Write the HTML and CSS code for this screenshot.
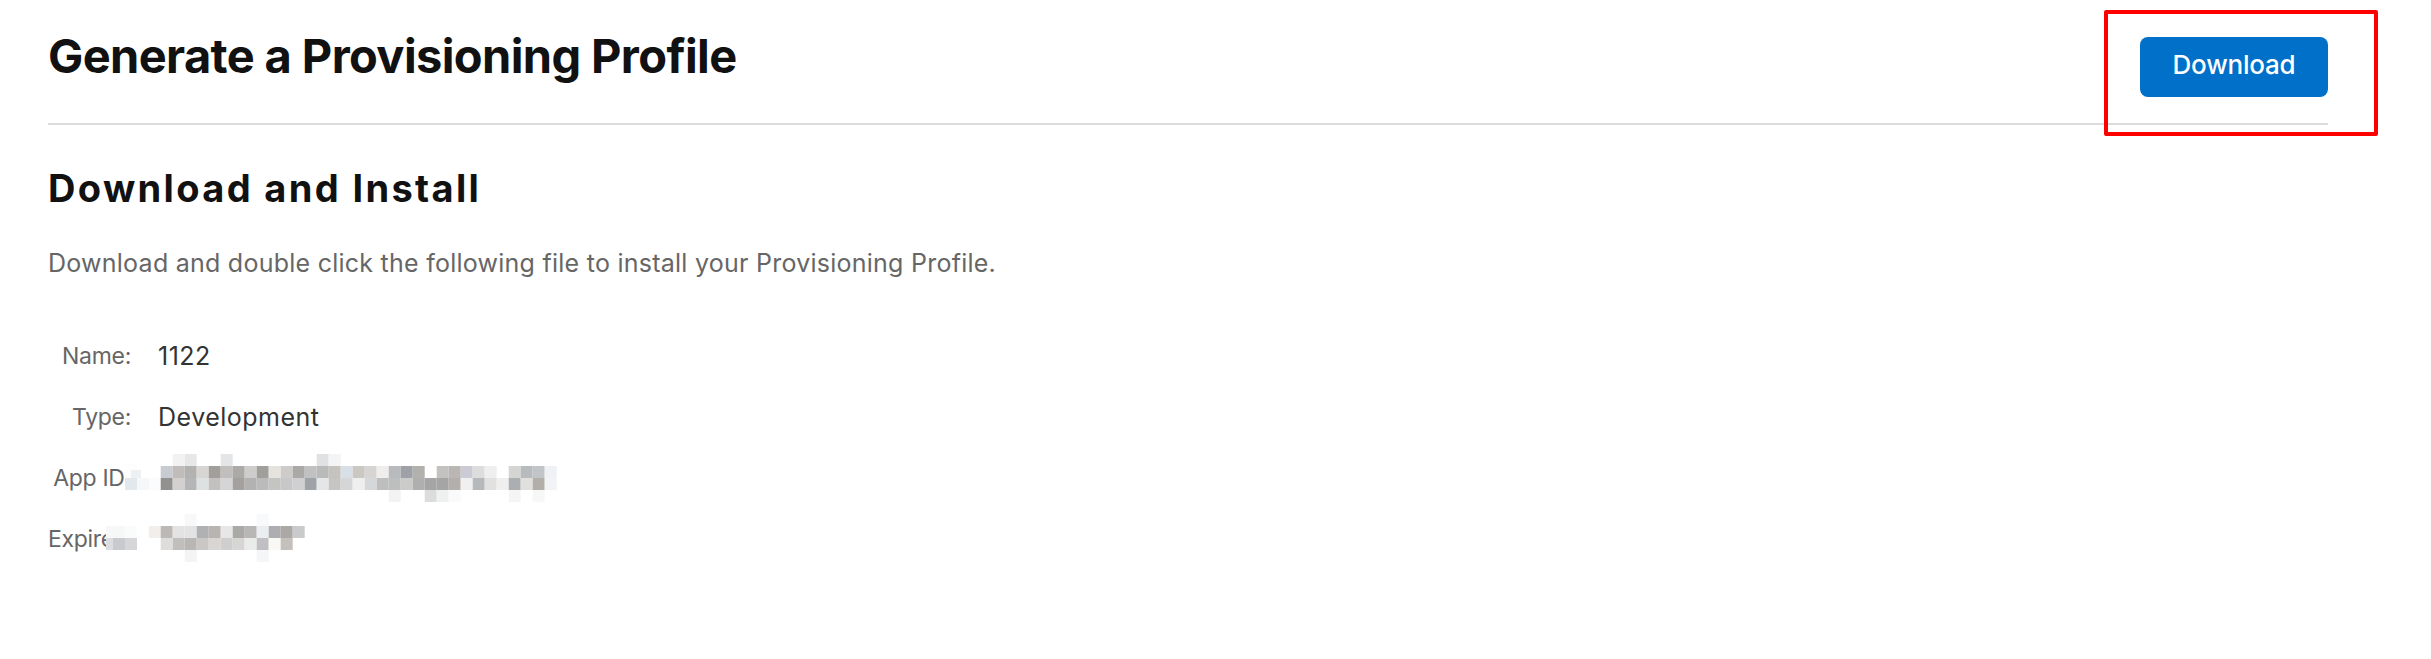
FILE: index.html
```html
<!DOCTYPE html>
<html lang="en">
<head>
<meta charset="utf-8">
<title>Generate a Provisioning Profile</title>
<link rel="stylesheet" href="styles.css">
</head>
<body>
<div class="page">
  <header class="page-header">
    <h1 class="title">Generate a Provisioning Profile</h1>
    <button class="btn-primary" type="button">Download</button>
  </header>
  <section class="section">
    <h2 class="section-title">Download and Install</h2>
    <p class="section-desc">Download and double click the following file to install your Provisioning Profile.</p>
    <div class="details">
      <div class="row">
        <span class="label">Name:</span>
        <span class="value">1122</span>
      </div>
      <div class="row">
        <span class="label">Type:</span>
        <span class="value">Development</span>
      </div>
      <div class="row">
        <span class="label">App ID:</span>
        <span class="value">&nbsp;</span>
        <svg class="mosaic mosaic-appid" width="470" height="60" viewBox="100 450 470 60" aria-hidden="true">
          <g>
            <rect x="125" y="464" width="12" height="14" fill="#fdfdfe"/>
            <rect x="125" y="478" width="12" height="12" fill="#e3e8ec"/>
            <rect x="137" y="478" width="12" height="12" fill="#f5f7f9"/>
            <rect x="149" y="478" width="12" height="12" fill="#fbfcfd"/>
            <rect x="131" y="470" width="10" height="8" fill="#eef1f4"/>
          </g>
          <g>
            <rect x="172.7" y="454" width="12" height="12" fill="#f2f2f2"/>
            <rect x="184.7" y="454" width="12" height="12" fill="#e6e7e9"/>
            <rect x="220.7" y="454" width="12" height="12" fill="#e4e5e7"/>
            <rect x="316.7" y="454" width="12" height="12" fill="#e0e1e3"/>
            <rect x="328.7" y="454" width="12" height="12" fill="#f4f4f4"/>
          </g>
          <g>
            <rect x="160.7" y="466" width="12" height="12" fill="#c8ccd2"/>
            <rect x="172.7" y="466" width="12" height="12" fill="#bfbcb9"/>
            <rect x="184.7" y="466" width="12" height="12" fill="#b4b2b0"/>
            <rect x="196.7" y="466" width="12" height="12" fill="#d7d6d3"/>
            <rect x="208.7" y="466" width="12" height="12" fill="#a29f9b"/>
            <rect x="220.7" y="466" width="12" height="12" fill="#c0bfbe"/>
            <rect x="232.7" y="466" width="12" height="12" fill="#acaaa7"/>
            <rect x="244.7" y="466" width="12" height="12" fill="#cfcdcb"/>
            <rect x="256.7" y="466" width="12" height="12" fill="#a19f9b"/>
            <rect x="268.7" y="466" width="12" height="12" fill="#e6e3de"/>
            <rect x="280.7" y="466" width="12" height="12" fill="#cdcccb"/>
            <rect x="292.7" y="466" width="12" height="12" fill="#aba9a5"/>
            <rect x="304.7" y="466" width="12" height="12" fill="#c1c1c1"/>
            <rect x="316.7" y="466" width="12" height="12" fill="#b9bbba"/>
            <rect x="328.7" y="466" width="12" height="12" fill="#c6c3bf"/>
            <rect x="340.7" y="466" width="12" height="12" fill="#d9dfe7"/>
            <rect x="352.7" y="466" width="12" height="12" fill="#cbc7c3"/>
            <rect x="364.7" y="466" width="12" height="12" fill="#d6d5d3"/>
            <rect x="376.7" y="466" width="12" height="12" fill="#efeeec"/>
            <rect x="388.7" y="466" width="12" height="12" fill="#b8babd"/>
            <rect x="400.7" y="466" width="12" height="12" fill="#9ea2a8"/>
            <rect x="412.7" y="466" width="12" height="12" fill="#b2b1ad"/>
            <rect x="436.7" y="466" width="12" height="12" fill="#c3c2c0"/>
            <rect x="448.7" y="466" width="12" height="12" fill="#b9b6b3"/>
            <rect x="460.7" y="466" width="12" height="12" fill="#cacbd5"/>
            <rect x="472.7" y="466" width="12" height="12" fill="#dddddd"/>
            <rect x="484.7" y="466" width="12" height="12" fill="#efefef"/>
            <rect x="508.7" y="466" width="12" height="12" fill="#d5d5d3"/>
            <rect x="520.7" y="466" width="12" height="12" fill="#b8bbbd"/>
            <rect x="532.7" y="466" width="12" height="12" fill="#c2c5c8"/>
            <rect x="544.7" y="466" width="12" height="12" fill="#eef1f5"/>
          </g>
          <g>
            <rect x="160.7" y="478" width="12" height="12" fill="#93918f"/>
            <rect x="172.7" y="478" width="12" height="12" fill="#d2d1cf"/>
            <rect x="184.7" y="478" width="12" height="12" fill="#b5b5b7"/>
            <rect x="196.7" y="478" width="12" height="12" fill="#dee1e2"/>
            <rect x="208.7" y="478" width="12" height="12" fill="#c3c1c0"/>
            <rect x="220.7" y="478" width="12" height="12" fill="#d5d5d7"/>
            <rect x="232.7" y="478" width="12" height="12" fill="#a3a09d"/>
            <rect x="244.7" y="478" width="12" height="12" fill="#b2b2b2"/>
            <rect x="256.7" y="478" width="12" height="12" fill="#bbbbbb"/>
            <rect x="268.7" y="478" width="12" height="12" fill="#c4c4c2"/>
            <rect x="280.7" y="478" width="12" height="12" fill="#c8c8c8"/>
            <rect x="292.7" y="478" width="12" height="12" fill="#d0d0d2"/>
            <rect x="304.7" y="478" width="12" height="12" fill="#9fa3a8"/>
            <rect x="316.7" y="478" width="12" height="12" fill="#e5e6e8"/>
            <rect x="328.7" y="478" width="12" height="12" fill="#c6c5c1"/>
            <rect x="340.7" y="478" width="12" height="12" fill="#d5d6d8"/>
            <rect x="352.7" y="478" width="12" height="12" fill="#efefef"/>
            <rect x="364.7" y="478" width="12" height="12" fill="#d6d7d9"/>
            <rect x="376.7" y="478" width="12" height="12" fill="#bebebe"/>
            <rect x="388.7" y="478" width="12" height="12" fill="#bdbfbe"/>
            <rect x="400.7" y="478" width="12" height="12" fill="#cbcbc9"/>
            <rect x="412.7" y="478" width="12" height="12" fill="#afafaf"/>
            <rect x="424.7" y="478" width="12" height="12" fill="#a5a5a7"/>
            <rect x="436.7" y="478" width="12" height="12" fill="#a5a5a5"/>
            <rect x="448.7" y="478" width="12" height="12" fill="#b2afac"/>
            <rect x="460.7" y="478" width="12" height="12" fill="#f0f0f0"/>
            <rect x="472.7" y="478" width="12" height="12" fill="#b6b9bc"/>
            <rect x="484.7" y="478" width="12" height="12" fill="#e2e1df"/>
            <rect x="496.7" y="478" width="12" height="12" fill="#efefef"/>
            <rect x="508.7" y="478" width="12" height="12" fill="#abafb2"/>
            <rect x="520.7" y="478" width="12" height="12" fill="#e0e0de"/>
            <rect x="532.7" y="478" width="12" height="12" fill="#b2aeaa"/>
            <rect x="544.7" y="478" width="12" height="12" fill="#f1f3f6"/>
          </g>
          <g>
            <rect x="388.7" y="490" width="12" height="12" fill="#f3f3f3"/>
            <rect x="424.7" y="490" width="12" height="12" fill="#dcdcda"/>
            <rect x="436.7" y="490" width="12" height="12" fill="#eff0f0"/>
            <rect x="448.7" y="490" width="12" height="12" fill="#fafafa"/>
            <rect x="508.7" y="490" width="12" height="12" fill="#f5f5f5"/>
            <rect x="532.7" y="490" width="12" height="12" fill="#f7f7f7"/>
          </g>
        </svg>
      </div>
      <div class="row">
        <span class="label">Expires:</span>
        <span class="value">&nbsp;</span>
        <svg class="mosaic mosaic-expires" width="470" height="60" viewBox="100 510 470 60" aria-hidden="true">
          <g>
            <rect x="184.7" y="514" width="12" height="12" fill="#f7f8fa"/>
            <rect x="256.7" y="514" width="12" height="12" fill="#f8f9fb"/>
          </g>
          <g>
            <rect x="106" y="526" width="19" height="12" fill="#f6f7f7"/>
            <rect x="125" y="526" width="12" height="12" fill="#fafcfc"/>
            <rect x="137" y="526" width="12" height="24" fill="#ffffff"/>
            <rect x="148.7" y="526" width="12" height="12" fill="#f1eeeb"/>
            <rect x="160.7" y="526" width="12" height="12" fill="#bbb8b5"/>
            <rect x="172.7" y="526" width="12" height="12" fill="#e3e3e3"/>
            <rect x="184.7" y="526" width="12" height="12" fill="#e3e3e5"/>
            <rect x="196.7" y="526" width="12" height="12" fill="#b0b1b3"/>
            <rect x="208.7" y="526" width="12" height="12" fill="#b8b4b1"/>
            <rect x="220.7" y="526" width="12" height="12" fill="#e7e7e7"/>
            <rect x="232.7" y="526" width="12" height="12" fill="#aaa9a7"/>
            <rect x="244.7" y="526" width="12" height="12" fill="#b8b7b5"/>
            <rect x="256.7" y="526" width="12" height="12" fill="#ebeef1"/>
            <rect x="268.7" y="526" width="12" height="12" fill="#adadb2"/>
            <rect x="280.7" y="526" width="12" height="12" fill="#aba8a5"/>
            <rect x="292.7" y="526" width="12" height="12" fill="#c9cacc"/>
          </g>
          <g>
            <rect x="106" y="538" width="7" height="12" fill="#dcdde0"/>
            <rect x="113" y="538" width="12" height="12" fill="#c9cacd"/>
            <rect x="125" y="538" width="12" height="12" fill="#d6d6d8"/>
            <rect x="160.7" y="538" width="12" height="12" fill="#dedddb"/>
            <rect x="172.7" y="538" width="12" height="12" fill="#c0bfbd"/>
            <rect x="184.7" y="538" width="12" height="12" fill="#b8b7b5"/>
            <rect x="196.7" y="538" width="12" height="12" fill="#c9c8c4"/>
            <rect x="208.7" y="538" width="12" height="12" fill="#d9d5d2"/>
            <rect x="220.7" y="538" width="12" height="12" fill="#cfcfcf"/>
            <rect x="232.7" y="538" width="12" height="12" fill="#d7d6d4"/>
            <rect x="244.7" y="538" width="12" height="12" fill="#eaebeb"/>
            <rect x="256.7" y="538" width="12" height="12" fill="#c0c0c4"/>
            <rect x="268.7" y="538" width="12" height="12" fill="#f9f8f4"/>
            <rect x="280.7" y="538" width="12" height="12" fill="#c4c0bc"/>
          </g>
          <g>
            <rect x="184.7" y="550" width="12" height="12" fill="#f3f4f6"/>
            <rect x="256.7" y="550" width="12" height="12" fill="#f4f6f8"/>
          </g>
        </svg>
      </div>
    </div>
  </section>
  <div class="annotation" aria-hidden="true"></div>
</div>
</body>
</html>
```

FILE: styles.css
```css
* {
  box-sizing: border-box;
}

html, body {
  margin: 0;
  padding: 0;
  background: #ffffff;
}

body {
  font-family: Inter, "Noto Sans", "Liberation Sans", sans-serif;
  color: #111111;
}

.page {
  position: relative;
  padding: 0 103px 0 48px;
  min-height: 659px;
}

.page-header {
  display: flex;
  justify-content: space-between;
  align-items: flex-start;
  padding-top: 32px;
  padding-bottom: 26px;
  border-bottom: 2px solid #dcdcdc;
}

.title {
  margin: 0;
  font-size: 47px;
  line-height: 48px;
  font-weight: 700;
  letter-spacing: -0.62px;
  color: #111111;
}

.btn-primary {
  margin-top: 5px;
  width: 188px;
  height: 60px;
  padding: 0 0 5px 0;
  border: none;
  border-radius: 8px;
  background: #0070c9;
  color: #ffffff;
  font-family: Inter, "Noto Sans", sans-serif;
  font-size: 26px;
  line-height: 55px;
  font-weight: 500;
  letter-spacing: -0.2px;
}

.section {
  display: flex;
  flex-direction: column;
}

.section-title {
  margin: 40px 0 0 0;
  font-size: 38px;
  line-height: 46px;
  font-weight: 700;
  letter-spacing: 2.35px;
  color: #111111;
}

.section-desc {
  margin: 36px 0 0 0;
  font-size: 25px;
  line-height: 32px;
  letter-spacing: 0.25px;
  color: #666666;
}

.details {
  margin-top: 61px;
  display: flex;
  flex-direction: column;
  gap: 29px;
}

.row {
  position: relative;
  display: grid;
  grid-template-columns: 83px 1fr;
  column-gap: 27px;
  line-height: 32px;
}

.label {
  text-align: right;
  white-space: nowrap;
  font-size: 23px;
  letter-spacing: -0.3px;
  color: #666666;
}

.value {
  font-size: 25px;
  letter-spacing: 0.5px;
  color: #333333;
}

.mosaic {
  position: absolute;
  left: 52px;
}

.mosaic-appid {
  top: -12px;
}

.mosaic-expires {
  top: -13px;
}

.annotation {
  position: absolute;
  left: 2104px;
  top: 10px;
  width: 274px;
  height: 126px;
  border: 4px solid #ff0000;
  border-radius: 2px;
}
```
